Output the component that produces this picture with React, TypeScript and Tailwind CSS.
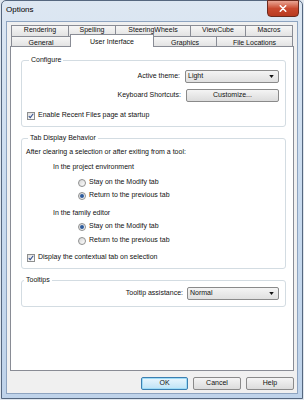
import { ReactNode } from "react";

const TOP_TABS = [
  { label: "Rendering", w: "w-[58px]" },
  { label: "Spelling", w: "w-[48px]" },
  { label: "SteeringWheels", w: "w-[76px]" },
  { label: "ViewCube", w: "w-[56px]" },
  { label: "Macros", w: "w-[48px]" },
];

const FRONT_TABS = [
  { label: "General", w: "w-[60px]" },
  { label: "User Interface", w: "w-[84px]", active: true },
  { label: "Graphics", w: "w-[64px]" },
  { label: "File Locations", w: "w-[77px]" },
];

function Group({ title, className, children }: { title: string; className?: string; children: ReactNode }) {
  return (
    <fieldset className={`rounded-[3px] border border-[#d3dce2] ${className ?? ""}`}>
      <legend className="ml-[2px] px-[2px] text-[7px] leading-[10px]">{title}</legend>
      {children}
    </fieldset>
  );
}

function Check() {
  return (
    <span className="flex h-[8px] w-[8px] shrink-0 items-center justify-center border border-[#8e8f8f] bg-linear-to-br from-[#dedede] to-white">
      <svg viewBox="0 0 8 8" className="h-[6px] w-[6px]">
        <path d="M1 4.2l2 2L7 1" stroke="#34508f" strokeWidth="1.4" fill="none" />
      </svg>
    </span>
  );
}

function Radio({ on }: { on?: boolean }) {
  return (
    <span className="flex h-[8px] w-[8px] shrink-0 items-center justify-center rounded-full border border-[#8e8f8f] bg-linear-to-br from-[#d6d6d6] to-white">
      {on && <span className="h-[4px] w-[4px] rounded-full bg-[#2d5b9c]" />}
    </span>
  );
}

function Combo({ value, w }: { value: string; w: string }) {
  return (
    <div className={`flex h-[13px] ${w} items-center justify-between rounded-[2px] border border-[#8a8a8a] bg-linear-to-b from-[#f4f4f4] to-[#e0e0e0] pl-[2px] pr-[4px]`}>
      <span>{value}</span>
      <svg viewBox="0 0 6 4" className="h-[3px] w-[5px]">
        <path d="M0 0h6L3 4z" fill="#111" />
      </svg>
    </div>
  );
}

function Button({ label, w, primary }: { label: string; w: string; primary?: boolean }) {
  return (
    <button
      className={`flex h-[13px] ${w} items-center justify-center rounded-[2px] border ${
        primary
          ? "border-[#3c7fb1] bg-linear-to-b from-[#eaf6fd] to-[#bfe3f6] shadow-[inset_0_0_0_1px_#9fdcf7]"
          : "border-[#8a8a8a] bg-linear-to-b from-[#f4f4f4] to-[#dcdcdc]"
      }`}
    >
      {label}
    </button>
  );
}

export default function App() {
  return (
    <div className="h-[400px] w-[304px] bg-[#dfe6ee] pl-px font-['Liberation_Sans',Arial,sans-serif] text-[7px] text-[#111]">
      <div className="flex h-[399px] w-[302px] flex-col rounded-t-[5px] border border-[#55677f] bg-linear-to-b from-[#dde7f2] via-[#c9dbef] to-[#bfd3ea] px-[4px] pb-[4px]">
        {/* Title bar */}
        <div className="flex h-[20px] shrink-0 items-start justify-between">
          <span className="mt-[4px] text-[8px] leading-[10px] text-black">Options</span>
          <div className="-mt-px mr-[-1px] flex h-[17px] w-[32px] items-center justify-center rounded-b-[4px] border border-[#6b2a1e] bg-linear-to-b from-[#e9a594] via-[#c9492f] to-[#b83a20]">
            <svg viewBox="0 0 10 9" className="h-[7px] w-[8px]">
              <path d="M1.5 1l7 7M8.5 1l-7 7" stroke="white" strokeWidth="2" strokeLinecap="round" />
            </svg>
          </div>
        </div>

        {/* Client */}
        <div className="flex flex-1 flex-col border border-[#8ea4c0] bg-[#f0f0f0] px-[3px] pt-[3px] pb-[3px]">
          {/* Tabs */}
          <div className="flex flex-col pl-px">
            <div className="flex h-[11px]">
              {TOP_TABS.map((t, i) => (
                <div
                  key={t.label}
                  className={`flex ${t.w} shrink-0 items-center justify-center border-x border-t border-[#898c95] bg-linear-to-b from-[#f6f6f6] to-[#e3e3e3] pb-[2px] leading-[8px] ${
                    i > 0 ? "-ml-px" : ""
                  }`}
                >
                  {t.label}
                </div>
              ))}
            </div>
            <div className="flex h-[10px] items-end">
              {FRONT_TABS.map((t, i) =>
                t.active ? (
                  <div
                    key={t.label}
                    className={`relative z-10 -mb-px -ml-px flex h-[13px] ${t.w} shrink-0 items-center justify-center border-x border-t border-[#898c95] bg-white leading-[9px]`}
                  >
                    {t.label}
                  </div>
                ) : (
                  <div
                    key={t.label}
                    className={`flex h-[10px] ${t.w} shrink-0 items-center justify-center border-x border-t border-[#898c95] bg-linear-to-b from-[#f6f6f6] to-[#e3e3e3] pt-px leading-[9px] ${
                      i > 0 ? "-ml-px" : ""
                    }`}
                  >
                    {t.label}
                  </div>
                )
              )}
            </div>
          </div>

          {/* Tab panel */}
          <div className="flex flex-1 flex-col border border-[#898c95] bg-white pr-[7px] pl-[10px]">
            <Group title="Configure" className="mt-[8px] pt-[5px] pr-[6px] pb-[6px] pl-[5px]">
              <div className="flex h-[12px] items-center justify-end gap-[5px]">
                <span>Active theme:</span>
                <Combo value="Light" w="w-[94px]" />
              </div>
              <div className="mt-[7px] flex h-[13px] items-center justify-end gap-[5px]">
                <span>Keyboard Shortcuts:</span>
                <Button label="Customize..." w="w-[93px]" />
              </div>
              <div className="mt-[9px] flex h-[9px] items-center gap-[3px]">
                <Check />
                <span>Enable Recent Files page at startup</span>
              </div>
            </Group>

            <Group title="Tab Display Behavior" className="mt-[6px] pt-[3px] pb-[4px] pl-[4px]">
              <div className="flex h-[13px] items-center">After clearing a selection or after exiting from a tool:</div>
              <div className="mt-[2px] flex h-[13px] items-center pl-[27px]">In the project environment</div>
              <div className="mt-[2px] flex h-[13px] items-center gap-[3px] pl-[52px]">
                <Radio />
                <span>Stay on the Modify tab</span>
              </div>
              <div className="flex h-[13px] items-center gap-[3px] pl-[52px]">
                <Radio on />
                <span>Return to the previous tab</span>
              </div>
              <div className="mt-[5px] flex h-[13px] items-center pl-[27px]">In the family editor</div>
              <div className="flex h-[13px] items-center gap-[3px] pl-[52px]">
                <Radio on />
                <span>Stay on the Modify tab</span>
              </div>
              <div className="mt-px flex h-[13px] items-center gap-[3px] pl-[52px]">
                <Radio />
                <span>Return to the previous tab</span>
              </div>
              <div className="mt-[4px] flex h-[13px] items-center gap-[3px] pl-px">
                <Check />
                <span>Display the contextual tab on selection</span>
              </div>
            </Group>

            <Group title="Tooltips" className="mt-[6px] pt-[2px] pr-[6px] pb-[6px]">
              <div className="flex h-[13px] items-center justify-end gap-[4px]">
                <span>Tooltip assistance:</span>
                <Combo value="Normal" w="w-[92px]" />
              </div>
            </Group>
          </div>

          {/* Dialog buttons */}
          <div className="mt-[6px] flex justify-end gap-[5px]">
            <Button label="OK" w="w-[47px]" primary />
            <Button label="Cancel" w="w-[48px]" />
            <Button label="Help" w="w-[48px]" />
          </div>
        </div>
      </div>
    </div>
  );
}
